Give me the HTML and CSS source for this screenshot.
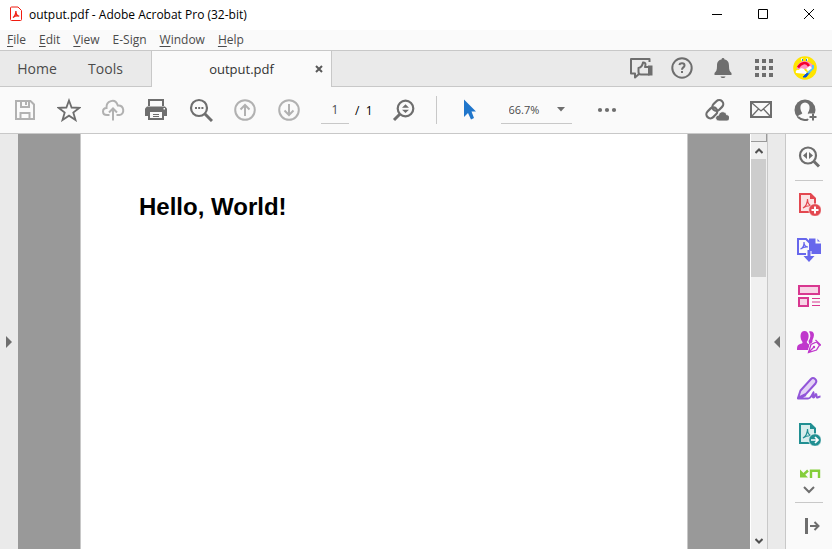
FILE: index.html
```html
<!DOCTYPE html>
<html lang="en">
<head>
<meta charset="utf-8">
<title>output.pdf - Adobe Acrobat Pro (32-bit)</title>
<link rel="stylesheet" href="styles.css">
</head>
<body>
<div class="app">
  <header class="titlebar">
    <svg class="app-icon" width="12" height="16" viewBox="0 0 12 16" fill="none" stroke="#f01c10"><path d="M2 1h6l3.500 3.500V13.500a1 1 0 0 1-1 1H1.500a1 1 0 0 1-1-1v-11.500a1 1 0 0 1 1-1z"/><path d="M3 11.500c1.300-.5 3-3.500 2.900-6.500 0 3 1.500 5 3.300 5.200-1.900-.5-4.700 0-6.200 1.300z" stroke-width="1.300"/></svg>
    <span class="title">output.pdf - Adobe Acrobat Pro (32-bit)</span>
    <div class="window-buttons">
      <button aria-label="Minimize"><svg width="12" height="12" viewBox="0 0 12 12" stroke="#000"><path d="M1 6.500h10"/></svg></button>
      <button aria-label="Maximize"><svg width="12" height="12" viewBox="0 0 12 12" stroke="#000" fill="none"><path d="M1.500 1.500h9v9h-9z"/></svg></button>
      <button aria-label="Close"><svg width="12" height="12" viewBox="0 0 12 12" stroke="#000"><path d="M1 1l10 10M11 1L1 11"/></svg></button>
    </div>
  </header>
  <nav class="menubar" aria-label="Menu">
    <button><u>F</u>ile</button><button><u>E</u>dit</button><button><u>V</u>iew</button><button>E-Sign</button><button><u>W</u>indow</button><button><u>H</u>elp</button>
  </nav>
  <div class="tabbar">
    <button class="tab tab-home">Home</button>
    <button class="tab tab-tools">Tools</button>
    <div class="tab-doc"><button class="tab-name">output.pdf</button><button class="tab-close" aria-label="Close tab"><svg width="8" height="8" viewBox="0 0 8 8" stroke="#5a5a5a" stroke-width="2"><path d="M1 1l6 6M7 1L1 7"/></svg></button></div>
    <div class="tab-actions">
      <button aria-label="Feedback"><svg width="24" height="24" viewBox="0 0 24 24" fill="none" stroke="#6e6e6e" stroke-width="2"><path d="M20.500 6V3H2v14.500h4v4l4-3.500" stroke-linejoin="round"/><path d="M9.500 12c2.500-.5 4-2.500 4.500-5.500 2.500-.5 3 1.500 2 4.500h4V18.500h-8c-2 0-2.500-1-2.500-2.500z" stroke-linejoin="round"/><path d="M19 9.500h4.500V19.500H19z" fill="#6e6e6e" stroke="none"/></svg></button>
      <button aria-label="Help"><svg width="24" height="24" viewBox="0 0 24 24" fill="none" stroke="#6e6e6e" stroke-width="2"><circle cx="12" cy="12" r="9.700"/><path d="M9.300 9c.6-2.300 5.200-2.300 5.200.4 0 2-2.500 2-2.500 4.300M12 15v2"/></svg></button>
      <button aria-label="Notifications"><svg width="24" height="24" viewBox="0 0 24 24" fill="#6e6e6e"><path d="M10.500 3.500c0-2 3-2 3 0 3.500.8 4.500 3 4.500 6.500 0 4 .7 5.500 2.500 7v2H3.500v-2C5.300 15.500 6 14 6 10c0-3.500 1-5.700 4.500-6.500zM9.500 20.500h5c-.7 2-4.300 2-5 0z"/></svg></button>
      <button aria-label="Apps"><svg width="24" height="24" viewBox="0 0 24 24" fill="#6e6e6e"><path d="M3 3h4v4H3zM10 3h4v4h-4zM17 3h4v4h-4zM3 10h4v4H3zM10 10h4v4h-4zM17 10h4v4h-4zM3 17h4v4H3zM10 17h4v4h-4zM17 17h4v4h-4z"/></svg></button>
      <button aria-label="Account"><svg width="24" height="24" viewBox="0 0 24 24"><circle cx="12" cy="12" r="11.800" fill="#ffe500"/><path d="M3.500 13C5 5 12 2 19.500 8.500L20 13z" fill="#ff93c0"/><path d="M5 11.500c3-5 8-6 11-1.500" fill="none" stroke="#f5002d" stroke-width="2.500"/><path d="M3 17c-1-2 1-4 3-3 1-3 6-2 6 1 2 0 2 2 1 3z" fill="#fff"/><path d="M8 2.500h2v2H8zM13 2.500h2v2h-2z" fill="#fff"/><path d="M9 3h1v2H9zM13 3h1v2h-1z" fill="#2189dc"/><path d="M10 21l3-3 4-2-4 5z" fill="#0754dc" stroke="#0754dc"/><path d="M15 17l5-5v-3" stroke="#58c3ff" stroke-width="2" fill="none"/><path d="M14 14l4-3" stroke="#fff" stroke-width="3"/></svg></button>
    </div>
  </div>
  <div class="toolbar">
    <button aria-label="Save"><svg width="24" height="24" viewBox="0 0 24 24" fill="none" stroke="#b1b1b1" stroke-width="2"><path d="M3 3h14.500L21 6.500V21H3z"/><path d="M8 3v6h8V3M13 4v3M7.500 21v-6h9v6"/></svg></button>
    <button aria-label="Star"><svg width="24" height="24" viewBox="0 0 24 24" fill="none" stroke="#6e6e6e" stroke-width="1.800"><path d="M12 2.500l2.600 7 7.800.3-6.100 4.700 2.200 7.500-6.500-4.300L5.500 22l2.200-7.500L1.600 9.800l7.800-.3z"/></svg></button>
    <button aria-label="Upload to cloud"><svg width="24" height="24" viewBox="0 0 24 24" fill="none" stroke="#b1b1b1" stroke-width="2"><path d="M8.500 17H6c-5.500 0-5-7-.5-7C5 3 14-.5 16.800 7.500 23.500 7 24 16.500 18.500 17h-3"/><path d="M12 22.500V11.500M8 14.500l4-4 4 4"/></svg></button>
    <button aria-label="Print"><svg width="24" height="24" viewBox="0 0 24 24"><path d="M4 8V2h14v6" fill="none" stroke="#6e6e6e" stroke-width="2"/><path d="M2 8.500h18l2 2V18H0v-7.500z" fill="#6e6e6e"/><path d="M4 13h14v8H4z" fill="#fafafa" stroke="#6e6e6e" stroke-width="2"/><path d="M8 16.500h6M8 18.500h6" stroke="#6e6e6e"/><path d="M18.500 10h1.500v1.500h-1.500z" fill="#fff"/></svg></button>
    <button aria-label="Find"><svg width="24" height="24" viewBox="0 0 24 24" fill="none" stroke="#6e6e6e" stroke-width="2.200"><circle cx="10" cy="10" r="8"/><path d="M16 16l7 7" stroke-width="3"/><path d="M6 9h2v2H6zM9.200 9h2v2h-2zM12.400 9h2v2h-2z" fill="#6e6e6e" stroke="none"/></svg></button>
    <button aria-label="Previous page"><svg width="24" height="24" viewBox="0 0 24 24" fill="none" stroke="#b1b1b1" stroke-width="2"><circle cx="12" cy="12" r="9.800"/><path d="M12 18V7.500M7.500 11.500L12 7l4.500 4.500"/></svg></button>
    <button aria-label="Next page"><svg width="24" height="24" viewBox="0 0 24 24" fill="none" stroke="#b1b1b1" stroke-width="2"><circle cx="12" cy="12" r="9.800"/><path d="M12 6v10.500M7.500 12.500L12 17l4.500-4.500"/></svg></button>
    <input class="page-input" aria-label="Page number" value="1">
    <span class="page-total">/&nbsp; 1</span>
    <button class="fit" aria-label="Zoom"><svg width="24" height="24" viewBox="0 0 24 24" fill="none" stroke="#6e6e6e" stroke-width="2.200"><circle cx="13.500" cy="10.500" r="7.800"/><path d="M8 16l-6 6" stroke-width="3"/><path d="M10 9.700h7l-3.500-3.500zM10 11.700h7L13.500 15z" fill="#6e6e6e" stroke="none"/></svg></button>
    <span class="separator"></span>
    <button class="pointer" aria-label="Select tool"><svg width="24" height="24" viewBox="0 0 24 24" fill="#2076cb"><path d="M7 1.500l12 12h-4.500l2.500 6.500-3 1.500-3-6.500-4 4z"/></svg></button>
    <span class="zoom"><select aria-label="Zoom level"><option>66.7%</option></select><svg width="8" height="5" viewBox="0 0 8 5" fill="#6e6e6e"><path d="M0 0h8L4 4.500z"/></svg></span>
    <button class="more" aria-label="More tools"><svg width="20" height="24" viewBox="0 0 20 24" fill="#6e6e6e"><circle cx="3" cy="12" r="2.100"/><circle cx="10" cy="12" r="2.100"/><circle cx="17" cy="12" r="2.100"/></svg></button>
    <div class="share">
      <button aria-label="Share link"><svg width="24" height="24" viewBox="0 0 24 24" fill="none" stroke="#6e6e6e" stroke-width="2.200"><g transform="rotate(-45 10 11)"><rect x="8.500" y="6.500" width="12" height="8" rx="4"/><rect x="-1" y="7.500" width="12" height="8" rx="4"/></g><path d="M14 23c-4.500-.3-4.300-5.500-.5-5.700 1-4.800 7.500-4.500 8 -.6 4.300.2 3.700 6.100.5 6.300z" fill="#6e6e6e" stroke="#fafafa" stroke-width=".8"/></svg></button>
      <button aria-label="Send by email"><svg width="24" height="24" viewBox="0 0 24 24" fill="none" stroke="#6e6e6e"><path d="M2 4h20v15H2z" stroke-width="2"/><path d="M3 5l9 8 9-8M3 18l6.500-7M21 18l-6.500-7" stroke-width="1.300"/></svg></button>
      <button aria-label="Share with others"><svg width="24" height="24" viewBox="0 0 24 24"><circle cx="12" cy="12" r="10.500" fill="#6e6e6e"/><path d="M4.800 18.500c.5-1.800 3.500-1.800 4.500-3.300C6.800 12 6 5 12 4.500c6 .5 5.200 7.500 2.700 10.700.6 1.300 2.300 1.400 3.300 2.300l-2 3.500H8z" fill="#fafafa"/><path d="M5 19c3 3 7 3.500 10 2.500" fill="none" stroke="#6e6e6e" stroke-width="2"/><path d="M15.500 15.500h8v8h-8z" fill="#fafafa"/><path d="M20 15.500v7M16.500 19h7" stroke="#6e6e6e" stroke-width="2"/></svg></button>
    </div>
  </div>
  <div class="workspace">
    <button class="pane-toggle" aria-label="Show navigation pane"><svg width="6" height="12" viewBox="0 0 6 12" fill="#6e6e6e"><path d="M0 0v12l6-6z"/></svg></button>
    <main class="viewer"><article class="page"><h1>Hello, World!</h1></article></main>
    <div class="scrollbar">
      <span class="split"></span>
      <button aria-label="Scroll up"><svg width="8" height="6" viewBox="0 0 8 6" fill="none" stroke="#505050" stroke-width="2"><path d="M.5 5L4 1.500 7.500 5"/></svg></button>
      <span class="thumb"></span>
      <button class="down" aria-label="Scroll down"><svg width="8" height="6" viewBox="0 0 8 6" fill="none" stroke="#505050" stroke-width="2"><path d="M.5 1L4 4.500 7.500 1"/></svg></button>
    </div>
    <button class="pane-toggle tools-toggle" aria-label="Hide tools pane"><svg width="6" height="12" viewBox="0 0 6 12" fill="#6e6e6e"><path d="M6 0v12L0 6z"/></svg></button>
    <aside class="tools">
      <button class="tool" aria-label="Search tools"><svg width="24" height="24" viewBox="0 0 24 24" fill="none" stroke="#6e6e6e" stroke-width="2.200"><circle cx="11" cy="10.500" r="8"/><path d="M17 16.500l5 5" stroke-width="3"/><path d="M10 7v7l-4-3.500zM12 7v7l4-3.500z" fill="#6e6e6e" stroke="none"/></svg></button>
      <span class="rule"></span>
      <div class="tool-list">
        <button class="tool" aria-label="Create PDF"><svg width="24" height="24" viewBox="0 0 24 24" fill="none" stroke="#e34850" stroke-width="2"><path d="M3 2h10.500L18 6.500V20H3V2z" fill="#fbe3e4"/><path d="M13 1l6 6h-6z" fill="#e34850" stroke="none"/><path d="M6 16c2.500-1 4.800-5.500 4.500-9 0 4 2 6.500 4.500 7-3-.6-6.500.2-9 2z" stroke-width="1.200"/><circle cx="18" cy="18" r="6.300" fill="#e34850" stroke="#fafafa" stroke-width=".6"/><path d="M18 14.500v7M14.500 18h7" stroke="#fff"/></svg></button>
        <button class="tool" aria-label="Export PDF"><svg width="24" height="26" viewBox="0 0 24 26" fill="none" stroke="#6767ec" stroke-width="2"><path d="M12 1.500h8l4 4V17H12z" fill="#6767ec" stroke="none"/><path d="M19.500 1v4.500H24" stroke="#fafafa"/><path d="M9 17H1V2h8l4 4v9" fill="#fafafa"/><path d="M3.500 12c2-.8 3.700-3.700 3.500-7 0 3 2 4.800 4 5-2.500-.3-5 .3-7.500 2z" stroke-width="1.200"/><path d="M9.500 14h5v5H19l-7 7-7-7h4.500z" fill="#fafafa" stroke="none"/><path d="M12 13v7" stroke-width="3"/><path d="M6.500 19h11L12 25z" fill="#6767ec" stroke="none"/></svg></button>
        <button class="tool" aria-label="Organize Pages"><svg width="24" height="24" viewBox="0 0 24 24" fill="#f7d4e6" stroke="#d83790" stroke-width="2"><path d="M2 2h20v8H2zM2 14h9v8H2z"/><path d="M15 14.500h8M15 18h8M15 21.500h8" stroke-width="1.200"/></svg></button>
        <button class="tool" aria-label="Request E-signatures"><svg width="24" height="24" viewBox="0 0 24 24" fill="#c038cc"><path d="M12 1.500c4-1.500 6 2 4.500 6-.7 2-1.500 3-1 4.500l-3 3-1-4c2.300-3 2.500-6.500.5-9.500z"/><path d="M7.500 1c5 0 5.200 7 2.200 11 .4 2 2.300 1.500 3 3L11 20H0c0-5 1-5.500 5-6.500.7-.5.6-1.500.2-2C2.500 7.500 3 1 7.500 1z"/><path d="M11 23l2-8.500 6.500-3.500 4.500 4.500-4 5.500z" fill="#fafafa" stroke="#fafafa"/><path d="M11.500 22.500l2.500-8 5.500-2.500 3 3-3 5zM11.500 22.500l5-5M18.500 10l5.500 5.500" fill="none" stroke="#c038cc" stroke-width="1.300"/><circle cx="17" cy="17" r="1.200"/></svg></button>
        <button class="tool" aria-label="Fill and Sign"><svg width="24" height="24" viewBox="0 0 24 24" fill="none" stroke="#9256d9" stroke-width="2"><path d="M1 22l2.500-7.500L14 3c2.500-2.500 7 1 4.500 4.500L9 18z" fill="#e4d3f6"/><path d="M9 19l-8 3.500h10c3 0 4.500-5 5.500-6 .6 1-1.500 5 0 5s1.500-3.500 2.500-3.500 0 3 1 3.500 1.500-1 3.500-1"/></svg></button>
        <button class="tool" aria-label="Send for Comments"><svg width="24" height="24" viewBox="0 0 24 24" fill="none" stroke="#218f92" stroke-width="2"><path d="M3 2h10.500L18 6.500V21H3V2z" fill="#d7edec"/><path d="M13 1l6 6h-6z" fill="#218f92" stroke="none"/><path d="M6 16c2.500-1 4.800-5.500 4.500-9 0 4 2 6.500 4.500 7-3-.6-6.500.2-9 2z" stroke-width="1.200"/><circle cx="18" cy="18" r="6.300" fill="#218f92" stroke="#fafafa" stroke-width=".8"/><path d="M14 18h6.500M18 15l3 3-3 3" stroke="#fff" stroke-width="1.700"/></svg></button>
        <button class="tool" aria-label="Compare Files"><svg width="24" height="24" viewBox="0 0 24 24" fill="none" stroke="#84ce3b" stroke-width="2.400"><path d="M5 8l6-5.500"/><path d="M3 1.500v8h8z" fill="#84ce3b" stroke="none"/><path d="M14 2.700h8V15h-8z"/></svg></button>
      </div>
      <button class="tool-more" aria-label="More tools"><svg width="12" height="8" viewBox="0 0 12 8" fill="none" stroke="#6e6e6e" stroke-width="2"><path d="M1 1l5 5 5-5"/></svg></button>
      <span class="rule"></span>
      <button class="tool" aria-label="Collapse pane"><svg width="24" height="24" viewBox="0 0 24 24" fill="none" stroke="#6e6e6e" stroke-width="2"><path d="M9.500 4v16" stroke-width="3"/><path d="M13 12h8M17.500 8l4 4-4 4"/></svg></button>
    </aside>
  </div>
</div>
</body>
</html>
```
FILE: styles.css
```css
* { box-sizing: border-box; }
body { margin: 0; font-family: "Open Sans", "Noto Sans", sans-serif; font-size: 12px; color: #4b4b4b; }
button, input, select { margin: 0; padding: 0; border: 0; border-radius: 0; background: none; color: inherit; font: inherit; }
button { display: flex; align-items: center; justify-content: center; }
svg { display: block; flex: none; }

.app { display: flex; flex-direction: column; height: 100vh; background: #fafafa; }

.titlebar { display: flex; align-items: center; height: 30px; padding: 0 0 2px 10px; background: #fff; color: #000; }
.title { margin-left: 7px; }
.window-buttons { display: flex; align-self: stretch; margin-left: auto; }
.window-buttons button { width: 46px; }

.menubar { display: flex; gap: 13px; height: 20px; padding: 0 0 2px 7px; }
.menubar u { text-underline-offset: 2px; }

.tabbar { display: flex; height: 37px; background: #eaeaea; border-top: 1px solid #c8c8c8; border-bottom: 1px solid #c8c8c8; }
.tab { font-size: 14px; }
.tab-home { width: 74px; }
.tab-tools { width: 63px; }
.tab-doc { display: flex; width: 181px; margin: 0 0 -1px 14px; background: #fafafa; border: solid #c8c8c8; border-width: 0 1px; }
.tab-name { flex: 1; padding-left: 24px; font-size: 13px; color: #323232; }
.tab-close { width: 24px; }
.tab-actions { display: flex; margin-left: auto; padding: 0 7px 2px 0; }
.tab-actions button { width: 41px; }

.toolbar { display: flex; align-items: center; height: 47px; padding-left: 3px; border-bottom: 1px solid #c8c8c8; }
.toolbar button { width: 44px; height: 46px; }
.page-input { width: 28px; height: 28px; margin-left: 10px; border-bottom: 1px solid #c8c8c8; text-align: center; }
.page-total { margin-left: 6px; color: #000; }
.toolbar .fit { width: 24px; margin-left: 19px; }
.separator { width: 1px; height: 28px; margin-left: 20px; background: #c8c8c8; }
.toolbar .pointer { width: 24px; margin-left: 20px; }
.zoom { display: flex; align-items: center; width: 71px; height: 28px; margin-left: 20px; padding: 0 7px 0 8px; border-bottom: 1px solid #c8c8c8; }
.zoom select { flex: 1; min-width: 0; appearance: none; font-size: 11px; }
.toolbar .more { width: 20px; margin-left: 25px; }
.share { display: flex; margin-left: auto; padding-right: 5px; }

.workspace { display: flex; flex: 1; min-height: 0; }
.pane-toggle { width: 18px; background: #eaeaea; }
.viewer { flex: 1; padding: 0 62px; background: #999; }
.page { height: 100%; padding: 56px 58px; background: #fff; border-left: 1px solid #c8c8c8; border-right: 1px solid #c8c8c8; }
.page h1 { margin: 0; font: bold 24px/34px "Liberation Sans", sans-serif; color: #000; }

.scrollbar { display: flex; flex-direction: column; width: 18px; background: #f0f0f0; border-left: 1px solid #fff; border-right: 1px solid #c8c8c8; }
.split { height: 8px; background: #eaeaea; border-right: 1px solid #999; border-bottom: 1px solid #999; }
.scrollbar button { height: 17px; padding-right: 1px; }
.thumb { height: 118px; margin-right: 1px; background: #cdcdcd; }
.scrollbar .down { margin-top: auto; }
.tools-toggle { border-right: 1px solid #c8c8c8; }

.tools { display: flex; flex-direction: column; align-items: center; width: 46px; }
.tool { flex: none; width: 46px; height: 46px; }
.rule { flex: none; width: 28px; height: 1px; background: #c8c8c8; }
.tool-list { flex: 1; min-height: 0; overflow: hidden; }
.tool-more { flex: none; width: 46px; height: 24px; }
```
